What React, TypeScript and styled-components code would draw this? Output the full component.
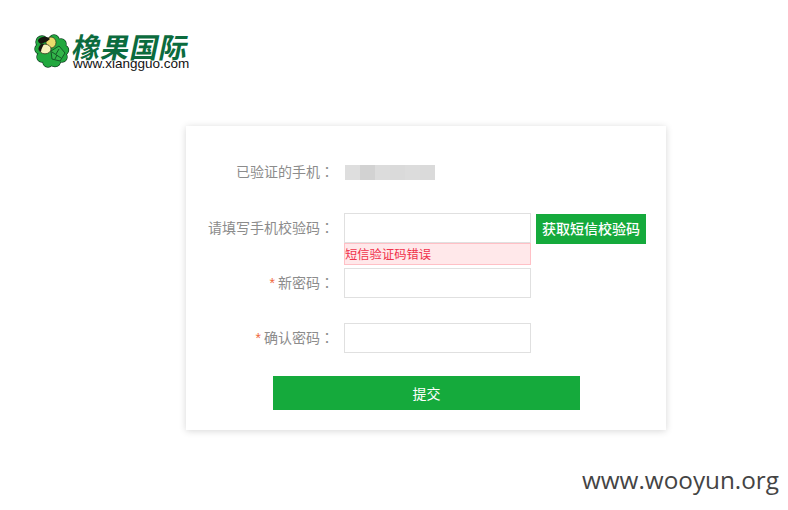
import React from "react";
import styled, { createGlobalStyle } from "styled-components";

const GlobalStyle = createGlobalStyle`
  html, body {
    margin: 0;
    padding: 0;
    background: #fff;
    font-family: "Liberation Sans", "Noto Sans CJK SC", sans-serif;
  }
`;

const Page = styled.div`
  position: relative;
  width: 788px;
  height: 510px;
  overflow: hidden;
`;

const Header = styled.header`
  display: flex;
  align-items: flex-start;
  gap: 4px;
  padding: 34px 0 0 34px;
  height: 126px;
  box-sizing: border-box;
`;

const LogoText = styled.div`
  display: flex;
  flex-direction: column;
  margin-left: -1px;
`;

const LogoTitle = styled.div`
  font-family: "Noto Sans CJK SC", sans-serif;
  font-size: 28px;
  font-weight: 700;
  line-height: 24px;
  height: 23px;
  color: #0b6b3e;
  letter-spacing: 1px;
  transform: skewX(-12deg);
  transform-origin: left bottom;
  margin-left: -2px;
`;

const LogoUrl = styled.div`
  font-size: 13.5px;
  line-height: 14px;
  color: #111;
`;

const Card = styled.form`
  width: 480px;
  height: 304px;
  margin-left: 186px;
  padding-top: 31px;
  box-sizing: border-box;
  background: #fff;
  box-shadow: 0 1px 7px rgba(0, 0, 0, 0.16);
`;

const Row = styled.div<{ $gap: number }>`
  display: grid;
  grid-template-columns: 148px 187px auto;
  column-gap: 10px;
  margin-bottom: ${(p) => p.$gap}px;
`;

const Label = styled.label`
  height: 30px;
  line-height: 29px;
  text-align: right;
  font-size: 14px;
  color: #8c8c8c;
  font-family: "Noto Sans CJK TC", sans-serif;
  white-space: nowrap;
`;

const Star = styled.span`
  color: #f0683c;
  font-family: "Liberation Sans", sans-serif;
`;

const Masked = styled.div`
  display: flex;
  align-self: center;
  width: 90px;
  height: 15px;
  margin-left: 1px;
`;

const MaskCell = styled.span<{ $tone: string }>`
  flex: 1;
  background: ${(p) => p.$tone};
`;

const Field = styled.div`
  display: flex;
  flex-direction: column;
`;

const Input = styled.input`
  display: block;
  width: 187px;
  height: 30px;
  box-sizing: border-box;
  border: 1px solid #e0e0e0;
  outline: none;
  background: #fff;
`;

const ErrorTip = styled.div`
  height: 22px;
  box-sizing: border-box;
  border: 1px solid #ffc0c6;
  background: #ffe8ea;
  color: #f0324b;
  font-family: "Noto Sans CJK SC", sans-serif;
  font-size: 12.3px;
  line-height: 20px;
`;

const SmsButton = styled.button`
  width: 110px;
  height: 30px;
  margin: 1px 0 0 -5px;
  padding: 0 0 2px;
  border: none;
  background: #15aa3c;
  color: #fff;
  font-family: "Noto Sans CJK SC", sans-serif;
  font-size: 14px;
  font-weight: 500;
`;

const Submit = styled.button`
  display: block;
  width: 307px;
  height: 34px;
  margin-left: 87px;
  padding: 0;
  border: none;
  background: #15aa3c;
  color: #fff;
  font-family: "Noto Sans CJK SC", sans-serif;
  font-size: 14px;
`;

const Watermark = styled.div`
  position: absolute;
  right: 9px;
  top: 464px;
  font-family: "Open Sans", sans-serif;
  font-size: 24.3px;
  line-height: 32px;
  color: #444;
`;

const tones = ["#dedede", "#d2d2d2", "#dcdcdc", "#dadada", "#dcdcdc", "#dadada"];

const lobes = [
  [8, 8, 6],
  [20, 6, 5],
  [27, 10, 5],
  [30, 16, 4.5],
  [28, 23, 5],
  [21, 27, 5.5],
  [14, 28, 5],
  [8, 23, 5],
  [6, 15, 5],
  [18, 17, 11],
];

const CloverLogo = () => (
  <svg width="36" height="34" viewBox="0 0 36 34">
    {lobes.map(([cx, cy, r], i) => (
      <circle key={i} cx={cx} cy={cy} r={r} fill="#0f3f20" stroke="#0f3f20" strokeWidth="1.4" />
    ))}
    {lobes.map(([cx, cy, r], i) => (
      <circle key={i} cx={cx} cy={cy} r={r} fill="#22a83f" />
    ))}
    <path d="M17 17 L25 12 L31 19 L26 27 L18 25 Z" fill="#33b54a" stroke="#0f3f20" strokeWidth="0.8" />
    <path d="M18 18 L27 24 M22 20 L25 15 M23 21 L21 25" stroke="#0f3f20" strokeWidth="0.8" fill="none" />
    <ellipse cx="17" cy="8.5" rx="5" ry="5.5" fill="#e9dc6c" stroke="#2a2a10" strokeWidth="0.7" />
    <ellipse cx="11" cy="15" rx="6" ry="4.8" fill="#f6f2bb" stroke="#2a2a10" strokeWidth="0.7" />
    <path d="M4 6 C7 2 13 2 16 5 C13 8 9 9 7 10 C5 9 4 8 4 6 Z" fill="#17170f" />
    <path d="M5 13 C6 10 8 9 10 10 C9 12 7 15 7 18 C5 17 4 15 5 13 Z" fill="#17170f" />
  </svg>
);

export default function App() {
  return (
    <>
      <GlobalStyle />
      <Page>
        <Header>
          <CloverLogo />
          <LogoText>
            <LogoTitle>橡果国际</LogoTitle>
            <LogoUrl>www.xiangguo.com</LogoUrl>
          </LogoText>
        </Header>
        <Card>
          <Row $gap={26}>
            <Label>已验证的手机：</Label>
            <Masked>
              {tones.map((tone, i) => (
                <MaskCell key={i} $tone={tone} />
              ))}
            </Masked>
          </Row>
          <Row $gap={3}>
            <Label>请填写手机校验码：</Label>
            <Field>
              <Input />
              <ErrorTip>短信验证码错误</ErrorTip>
            </Field>
            <SmsButton type="button">获取短信校验码</SmsButton>
          </Row>
          <Row $gap={25}>
            <Label>
              <Star>*</Star> 新密码：
            </Label>
            <Input type="password" />
          </Row>
          <Row $gap={23}>
            <Label>
              <Star>*</Star> 确认密码：
            </Label>
            <Input type="password" />
          </Row>
          <Submit type="button">提交</Submit>
        </Card>
        <Watermark>www.wooyun.org</Watermark>
      </Page>
    </>
  );
}
